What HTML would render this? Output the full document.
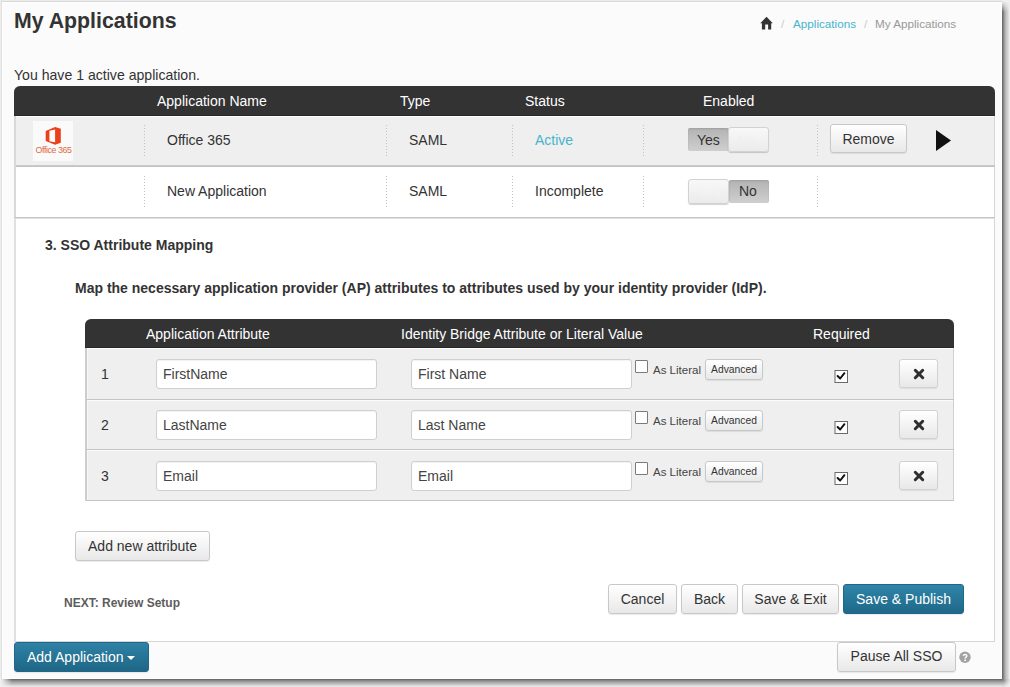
<!DOCTYPE html>
<html><head><meta charset="utf-8">
<style>
*{box-sizing:border-box;margin:0;padding:0}
html,body{width:1010px;height:687px;overflow:hidden;background:#fff;font-family:"Liberation Sans",sans-serif;color:#333}
#bg{position:absolute;left:0;top:0;width:1010px;height:687px;background:#f4f4f4}
#topband{position:absolute;left:0;top:0;width:1002px;height:2px;background:linear-gradient(#ececec 0 1px,#d8d8d8 1px 2px)}
#leftband{position:absolute;left:0;top:0;width:2px;height:679px;background:linear-gradient(to right,#ececec 0 1px,#e0e0e0 1px 2px)}
#page{position:absolute;left:2px;top:2px;width:1000px;height:677px;background:#fbfbfb;border:1px solid #fff}
#rsh{position:absolute;left:1002px;top:0;width:8px;height:687px;background:linear-gradient(to right,#6e6e6e 0 1px,#858585 1px 2px,#a0a0a0 2px 3px,#b6b6b6 3px 4px,#c4c4c4 4px 5px,#d0d0d0 5px 6px,#dedede 6px 7px,#ececec 7px 8px)}
#rshm{position:absolute;left:1002px;top:0;width:8px;height:12px;background:linear-gradient(#f0f0f0 10%,rgba(240,240,240,0))}
#bsh{position:absolute;left:0;top:679px;width:1002px;height:8px;background:linear-gradient(#6b6b6b 0 1px,#858585 1px 2px,#9a9a9a 2px 3px,#aaaaaa 3px 4px,#b8b8b8 4px 5px,#c8c8c8 5px 6px,#d8d8d8 6px 7px,#e6e6e6 7px 8px)}
#bshm{position:absolute;left:0;top:679px;width:12px;height:8px;background:linear-gradient(to right,#f0f0f0 10%,rgba(240,240,240,0))}
#csh{position:absolute;left:1002px;top:679px;width:8px;height:8px;background:radial-gradient(circle at 0 0,#6e6e6e 0,#a0a0a0 3px,#d0d0d0 6px,#eeeeee 9px)}
.abs{position:absolute;white-space:nowrap}
h1{position:absolute;left:14px;top:9px;font-size:21.3px;font-weight:bold;color:#333;white-space:nowrap}
.bc{position:absolute;top:17px;font-size:11.7px;white-space:nowrap}
.hdr{position:absolute;background:#333;color:#fff;font-size:14px;box-shadow:inset 0 -1px 0 #272727}
.hdr span{position:absolute;top:7px;white-space:nowrap}
.t14{font-size:14px}
.sep{position:absolute;width:1px;background:repeating-linear-gradient(#c2c2c2 0 1px,transparent 1px 3px)}
.btn{position:absolute;border:1px solid #c8c8c8;border-radius:3px;background:linear-gradient(#fff,#e8e8e8);font-size:14px;color:#333;text-align:center;white-space:nowrap;box-shadow:0 1px 1px rgba(0,0,0,.08)}
.inp{position:absolute;border:1px solid #cfcfcf;border-radius:3px;background:#fff;font-size:14px;color:#444;padding-left:6px;white-space:nowrap;box-shadow:inset 0 1px 1px rgba(0,0,0,.05)}
</style></head><body>
<div id="bg"></div>
<div id="topband"></div>
<div id="leftband"></div>
<div id="page"></div>
<div id="rsh"></div><div id="rshm"></div><div id="bsh"></div><div id="bshm"></div><div id="csh"></div>

<h1>My Applications</h1>
<!-- breadcrumb -->
<svg class="abs" style="left:760px;top:16px" width="14" height="14" viewBox="0 0 14 14"><path d="M6.5 0.8 L0.2 7.3 L1.9 7.3 L1.9 13.4 L5.2 13.4 L5.2 8.6 L8.1 8.6 L8.1 13.4 L11.2 13.4 L11.2 7.3 L12.8 7.3 Z" fill="#333"/></svg>
<div class="bc" style="left:781px;color:#ccc">/</div>
<div class="bc" style="left:793px;color:#46b5cc">Applications</div>
<div class="bc" style="left:864px;color:#ccc">/</div>
<div class="bc" style="left:875px;color:#999">My Applications</div>

<div class="abs" style="left:14px;top:67px;color:#333;font-size:14.1px">You have 1 active application.</div>

<!-- main table -->
<div class="hdr" style="left:14px;top:86px;width:981px;height:30px;border-radius:6px 6px 0 0">
  <span style="left:143px">Application Name</span>
  <span style="left:386px">Type</span>
  <span style="left:511px">Status</span>
  <span style="left:689px">Enabled</span>
</div>
<div class="abs" style="left:14px;top:116px;width:981px;height:526px;background:#fff;border:1px solid #d6d6d6;border-left:2px solid #e0e0e0;border-top:none"></div>
<div class="abs" style="left:16px;top:116px;width:978px;height:50px;background:#efefef"></div>
<div class="abs" style="left:16px;top:116px;width:978px;height:1px;background:#fdfdfd"></div>
<div class="abs" style="left:14px;top:165px;width:981px;height:2px;background:linear-gradient(#cbcbcb 0 1px,#c2c2c2 1px 2px)"></div>
<div class="abs" style="left:14px;top:116px;width:2px;height:102px;background:#d8d8d8"></div>
<div class="abs" style="left:14px;top:217px;width:981px;height:2px;background:linear-gradient(#c4c4c4 0 1px,#e2e2e2 1px 2px)"></div>

<!-- panel -->


<!-- office logo -->
<div class="abs" style="left:33px;top:121px;width:40px;height:40px;background:#fafafa"></div>
<svg class="abs" style="left:33px;top:121px" width="40" height="40" viewBox="0 0 40 40">
<path fill-rule="evenodd" d="M12.7 10 L22.1 6 L27.8 7.7 L27.8 21.8 L22.1 23.8 L12.7 20.1 Z M16.4 9.8 L22.1 8.4 L22.1 21.2 L16.4 20.3 Z" fill="#e8411b"/>
<text x="20.5" y="31.9" font-family="Liberation Sans" font-size="8.9" fill="#e46843" text-anchor="middle" letter-spacing="-0.45">Office 365</text>
</svg>

<div class="sep" style="left:144px;top:125px;height:31px"></div>
<div class="sep" style="left:386px;top:125px;height:31px"></div>
<div class="sep" style="left:512px;top:125px;height:31px"></div>
<div class="sep" style="left:643px;top:125px;height:31px"></div>
<div class="sep" style="left:817px;top:125px;height:31px"></div>
<div class="sep" style="left:144px;top:176px;height:31px"></div>
<div class="sep" style="left:386px;top:176px;height:31px"></div>
<div class="sep" style="left:512px;top:176px;height:31px"></div>
<div class="sep" style="left:643px;top:176px;height:31px"></div>
<div class="sep" style="left:817px;top:176px;height:31px"></div>

<div class="abs t14" style="left:167px;top:132px">Office 365</div>
<div class="abs t14" style="left:409px;top:132px">SAML</div>
<div class="abs t14" style="left:535px;top:132px;color:#46b5cc">Active</div>
<div class="abs t14" style="left:167px;top:183px">New Application</div>
<div class="abs t14" style="left:409px;top:183px">SAML</div>
<div class="abs t14" style="left:535px;top:183px">Incomplete</div>

<!-- toggles -->
<div class="abs" style="left:688px;top:128px;width:41px;height:23px;border-radius:2px;background:linear-gradient(#b3b3b3,#cfcfcf);box-shadow:inset 0 1px 2px rgba(0,0,0,.12)"></div>
<div class="abs t14" style="left:697px;top:132px">Yes</div>
<div class="abs" style="left:728px;top:127px;width:41px;height:25px;border:1px solid #d2d2d2;border-radius:3px;background:linear-gradient(#f8f8f8,#ebebeb);box-shadow:0 1px 1px rgba(0,0,0,.18)"></div>
<div class="abs t14" style="left:738px;top:132px;color:#f0f0f0">No</div>
<div class="abs" style="left:729px;top:180px;width:40px;height:23px;border-radius:2px;background:linear-gradient(#b3b3b3,#cfcfcf);box-shadow:inset 0 1px 2px rgba(0,0,0,.12)"></div>
<div class="abs t14" style="left:739px;top:183px">No</div>
<div class="abs" style="left:688px;top:179px;width:41px;height:25px;border:1px solid #d2d2d2;border-radius:3px;background:linear-gradient(#f8f8f8,#ebebeb);box-shadow:0 1px 1px rgba(0,0,0,.18)"></div>
<div class="abs t14" style="left:697px;top:183px;color:#f4f4f4">Yes</div>

<div class="btn" style="left:830px;top:124px;width:77px;height:29px;line-height:28px">Remove</div>
<svg class="abs" style="left:936px;top:130px" width="15" height="21" viewBox="0 0 15 21"><path d="M0 0 L15 10.5 L0 21 Z" fill="#111"/></svg>

<div class="abs" style="left:45px;top:237px;font-size:14px;font-weight:bold">3. SSO Attribute Mapping</div>
<div class="abs" style="left:75px;top:280px;font-size:14px;font-weight:bold">Map the necessary application provider (AP) attributes to attributes used by your identity provider (IdP).</div>

<!-- attribute table -->
<div class="hdr" style="left:85px;top:319px;width:869px;height:29px;border-radius:6px 6px 0 0">
  <span style="left:61px;top:7px">Application Attribute</span>
  <span style="left:316px;top:7px">Identity Bridge Attribute or Literal Value</span>
  <span style="left:728px;top:7px">Required</span>
</div>
<div class="abs" style="left:85px;top:348px;width:869px;height:153px;background:#efefef;border:1px solid #d0d0d0;border-left:2px solid #cdcdcd;border-top:none"></div>
<div class="abs" style="left:87px;top:348px;width:866px;height:1px;background:#fcfcfc"></div>
<div class="abs" style="left:87px;top:400px;width:866px;height:1px;background:#fcfcfc"></div>
<div class="abs" style="left:87px;top:450px;width:866px;height:1px;background:#fcfcfc"></div>
<div class="abs" style="left:87px;top:348px;width:1px;height:152px;background:#f5f7f8"></div>
<div class="abs" style="left:87px;top:399px;width:867px;height:1px;background:#c4c4c4"></div>
<div class="abs" style="left:87px;top:449px;width:867px;height:1px;background:#c4c4c4"></div>
<div class="abs" style="left:87px;top:500px;width:867px;height:1px;background:#c4c4c4"></div>

<div class="abs t14" style="left:101px;top:366px">1</div>
<div class="abs t14" style="left:101px;top:417px">2</div>
<div class="abs t14" style="left:101px;top:468px">3</div>

<div class="inp" style="left:156px;top:359px;width:221px;height:30px;line-height:28px">FirstName</div>
<div class="inp" style="left:411px;top:359px;width:221px;height:30px;line-height:28px">First Name</div>
<div class="inp" style="left:156px;top:410px;width:221px;height:30px;line-height:28px">LastName</div>
<div class="inp" style="left:411px;top:410px;width:221px;height:30px;line-height:28px">Last Name</div>
<div class="inp" style="left:156px;top:461px;width:221px;height:30px;line-height:28px">Email</div>
<div class="inp" style="left:411px;top:461px;width:221px;height:30px;line-height:28px">Email</div>

<div class="abs" style="left:635px;top:360px;width:13px;height:13px;border:1px solid #7a7a7a;background:#fff;border-radius:1px"></div>
<div class="abs" style="left:653px;top:364px;font-size:11.5px;color:#444">As Literal</div>
<div class="btn" style="left:705px;top:359px;width:58px;height:21px;line-height:19px;font-size:10.3px">Advanced</div>
<div class="abs" style="left:635px;top:411px;width:13px;height:13px;border:1px solid #7a7a7a;background:#fff;border-radius:1px"></div>
<div class="abs" style="left:653px;top:415px;font-size:11.5px;color:#444">As Literal</div>
<div class="btn" style="left:705px;top:410px;width:58px;height:21px;line-height:19px;font-size:10.3px">Advanced</div>
<div class="abs" style="left:635px;top:462px;width:13px;height:13px;border:1px solid #7a7a7a;background:#fff;border-radius:1px"></div>
<div class="abs" style="left:653px;top:466px;font-size:11.5px;color:#444">As Literal</div>
<div class="btn" style="left:705px;top:461px;width:58px;height:21px;line-height:19px;font-size:10.3px">Advanced</div>

<!-- required checkboxes -->
<svg class="abs" style="left:834px;top:370px" width="14" height="14" viewBox="0 0 14 14"><rect x="1" y="0.5" width="12.5" height="12" fill="#fff" stroke="#6a6a6a"/><path d="M3.6 6.0 L6.2 8.5 L10.4 3.2" fill="none" stroke="#111" stroke-width="2" stroke-linecap="round" stroke-linejoin="round"/></svg>
<svg class="abs" style="left:834px;top:421px" width="14" height="14" viewBox="0 0 14 14"><rect x="1" y="0.5" width="12.5" height="12" fill="#fff" stroke="#6a6a6a"/><path d="M3.6 6.0 L6.2 8.5 L10.4 3.2" fill="none" stroke="#111" stroke-width="2" stroke-linecap="round" stroke-linejoin="round"/></svg>
<svg class="abs" style="left:834px;top:472px" width="14" height="14" viewBox="0 0 14 14"><rect x="1" y="0.5" width="12.5" height="12" fill="#fff" stroke="#6a6a6a"/><path d="M3.6 6.0 L6.2 8.5 L10.4 3.2" fill="none" stroke="#111" stroke-width="2" stroke-linecap="round" stroke-linejoin="round"/></svg>

<div class="btn" style="left:899px;top:359px;width:39px;height:29px;border-color:#d2d2d2"></div>
<div class="btn" style="left:899px;top:410px;width:39px;height:29px;border-color:#d2d2d2"></div>
<div class="btn" style="left:899px;top:461px;width:39px;height:29px;border-color:#d2d2d2"></div>
<svg class="abs" style="left:912.5px;top:367.8px" width="12" height="12" viewBox="0 0 12 12"><path d="M2.3 2.3 L9.7 9.7 M9.7 2.3 L2.3 9.7" stroke="#2e2e2e" stroke-width="3" stroke-linecap="round"/></svg>
<svg class="abs" style="left:912.5px;top:418.8px" width="12" height="12" viewBox="0 0 12 12"><path d="M2.3 2.3 L9.7 9.7 M9.7 2.3 L2.3 9.7" stroke="#2e2e2e" stroke-width="3" stroke-linecap="round"/></svg>
<svg class="abs" style="left:912.5px;top:469.8px" width="12" height="12" viewBox="0 0 12 12"><path d="M2.3 2.3 L9.7 9.7 M9.7 2.3 L2.3 9.7" stroke="#2e2e2e" stroke-width="3" stroke-linecap="round"/></svg>

<div class="btn" style="left:75px;top:531px;width:135px;height:30px;line-height:28px">Add new attribute</div>

<div class="abs" style="left:64px;top:596px;font-size:12px;font-weight:bold;color:#5c5c5c">NEXT: Review Setup</div>

<div class="btn" style="left:608px;top:584px;width:69px;height:30px;line-height:28px">Cancel</div>
<div class="btn" style="left:681px;top:584px;width:57px;height:30px;line-height:28px">Back</div>
<div class="btn" style="left:742px;top:584px;width:97px;height:30px;line-height:28px">Save &amp; Exit</div>
<div class="btn" style="left:843px;top:584px;width:121px;height:30px;line-height:28px;background:linear-gradient(#2e85a8,#1f6889);border-color:#22668a;color:#fff">Save &amp; Publish</div>

<div class="btn" style="left:14px;top:642px;width:135px;height:30px;line-height:28px;background:linear-gradient(#2e82a5,#1f6686);border-color:#22668a;color:#fff;text-align:left;padding-left:12px">Add Application <span style="display:inline-block;width:0;height:0;border-left:4px solid transparent;border-right:4px solid transparent;border-top:4px solid #fff;vertical-align:middle"></span></div>
<div class="btn" style="left:837px;top:642px;width:119px;height:30px;line-height:27px">Pause All SSO</div>
<svg class="abs" style="left:959px;top:651px" width="13" height="13" viewBox="0 0 13 13"><circle cx="6" cy="6.3" r="5.7" fill="#a2a2a2"/><path d="M4.2 4.8 C4.2 3.2 7.9 3.0 7.9 4.8 C7.9 6.1 6.1 6.2 6.1 7.6" fill="none" stroke="#fff" stroke-width="1.35"/><rect x="5.3" y="8.5" width="1.7" height="1.5" fill="#fff"/></svg>

</body></html>
